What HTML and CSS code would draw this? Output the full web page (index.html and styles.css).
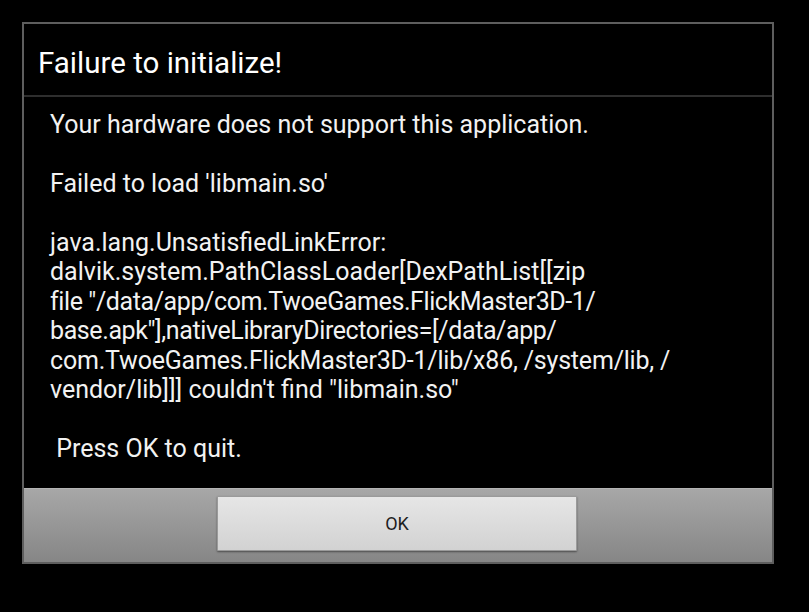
FILE: index.html
```html
<!DOCTYPE html>
<html>
<head>
<meta charset="utf-8">
<link rel="stylesheet" href="styles.css">
</head>
<body>
<div class="dialog">
  <div class="title">Failure to initialize!</div>
  <div class="message">
    <p class="line">Your hardware does not support this application.</p>
    <p class="line">&nbsp;</p>
    <p class="line">Failed to load 'libmain.so'</p>
    <p class="line">&nbsp;</p>
    <p class="line">java.lang.UnsatisfiedLinkError:</p>
    <p class="line">dalvik.system.PathClassLoader[DexPathList[[zip</p>
    <p class="line path-tight">file "/data/app/com.TwoeGames.FlickMaster3D-1/</p>
    <p class="line path-tight">base.apk"],nativeLibraryDirectories=[/data/app/</p>
    <p class="line path-snug">com.TwoeGames.FlickMaster3D-1/lib/x86, /system/lib, /</p>
    <p class="line">vendor/lib]]] couldn't find "libmain.so"</p>
    <p class="line">&nbsp;</p>
    <p class="line">&nbsp;Press OK to quit.</p>
  </div>
  <div class="buttons">
    <button class="ok">OK</button>
  </div>
</div>
</body>
</html>
```

FILE: styles.css
```css
html, body {
  margin: 0;
  padding: 0;
  background: #000;
}
body {
  width: 809px;
  height: 612px;
  overflow: hidden;
  font-family: Roboto, "Noto Sans", sans-serif;
}
.dialog {
  margin: 22px 0 0 22px;
  width: 752px;
  height: 542px;
  box-sizing: border-box;
  border: 2px solid #5e5e5e;
  background: #000;
  display: flex;
  flex-direction: column;
}
.title {
  height: 73px;
  box-sizing: border-box;
  border-bottom: 2px solid #2e2e2e;
  color: #fff;
  font-size: 29.5px;
  padding-top: 7px;
  line-height: 64px;
  padding-left: 14px;
  white-space: nowrap;
}
.message {
  flex: 1;
  padding: 13px 0 0 26px;
  color: #f2f2f2;
  font-size: 25px;
}
.line {
  margin: 0;
  height: 29.45px;
  line-height: 29.45px;
  white-space: pre;
}
.path-tight {
  letter-spacing: -0.4px;
}
.path-snug {
  letter-spacing: -0.2px;
}
.buttons {
  height: 74px;
  box-sizing: border-box;
  border-top: 1px solid #b4b4b4;
  background: linear-gradient(#a7a7a7, #868686);
  display: flex;
  justify-content: center;
  padding-top: 7px;
}
.ok {
  width: 360px;
  height: 55px;
  margin-right: 2px;
  border: 1px solid #9a9a9a;
  border-radius: 1px;
  background: linear-gradient(#e6e6e6, #d2d2d2);
  box-shadow: 0 1px 2px rgba(0,0,0,0.45);
  color: #1e1e1e;
  font-family: Roboto, "Noto Sans", sans-serif;
  font-size: 18px;
  padding: 0;
}
```
